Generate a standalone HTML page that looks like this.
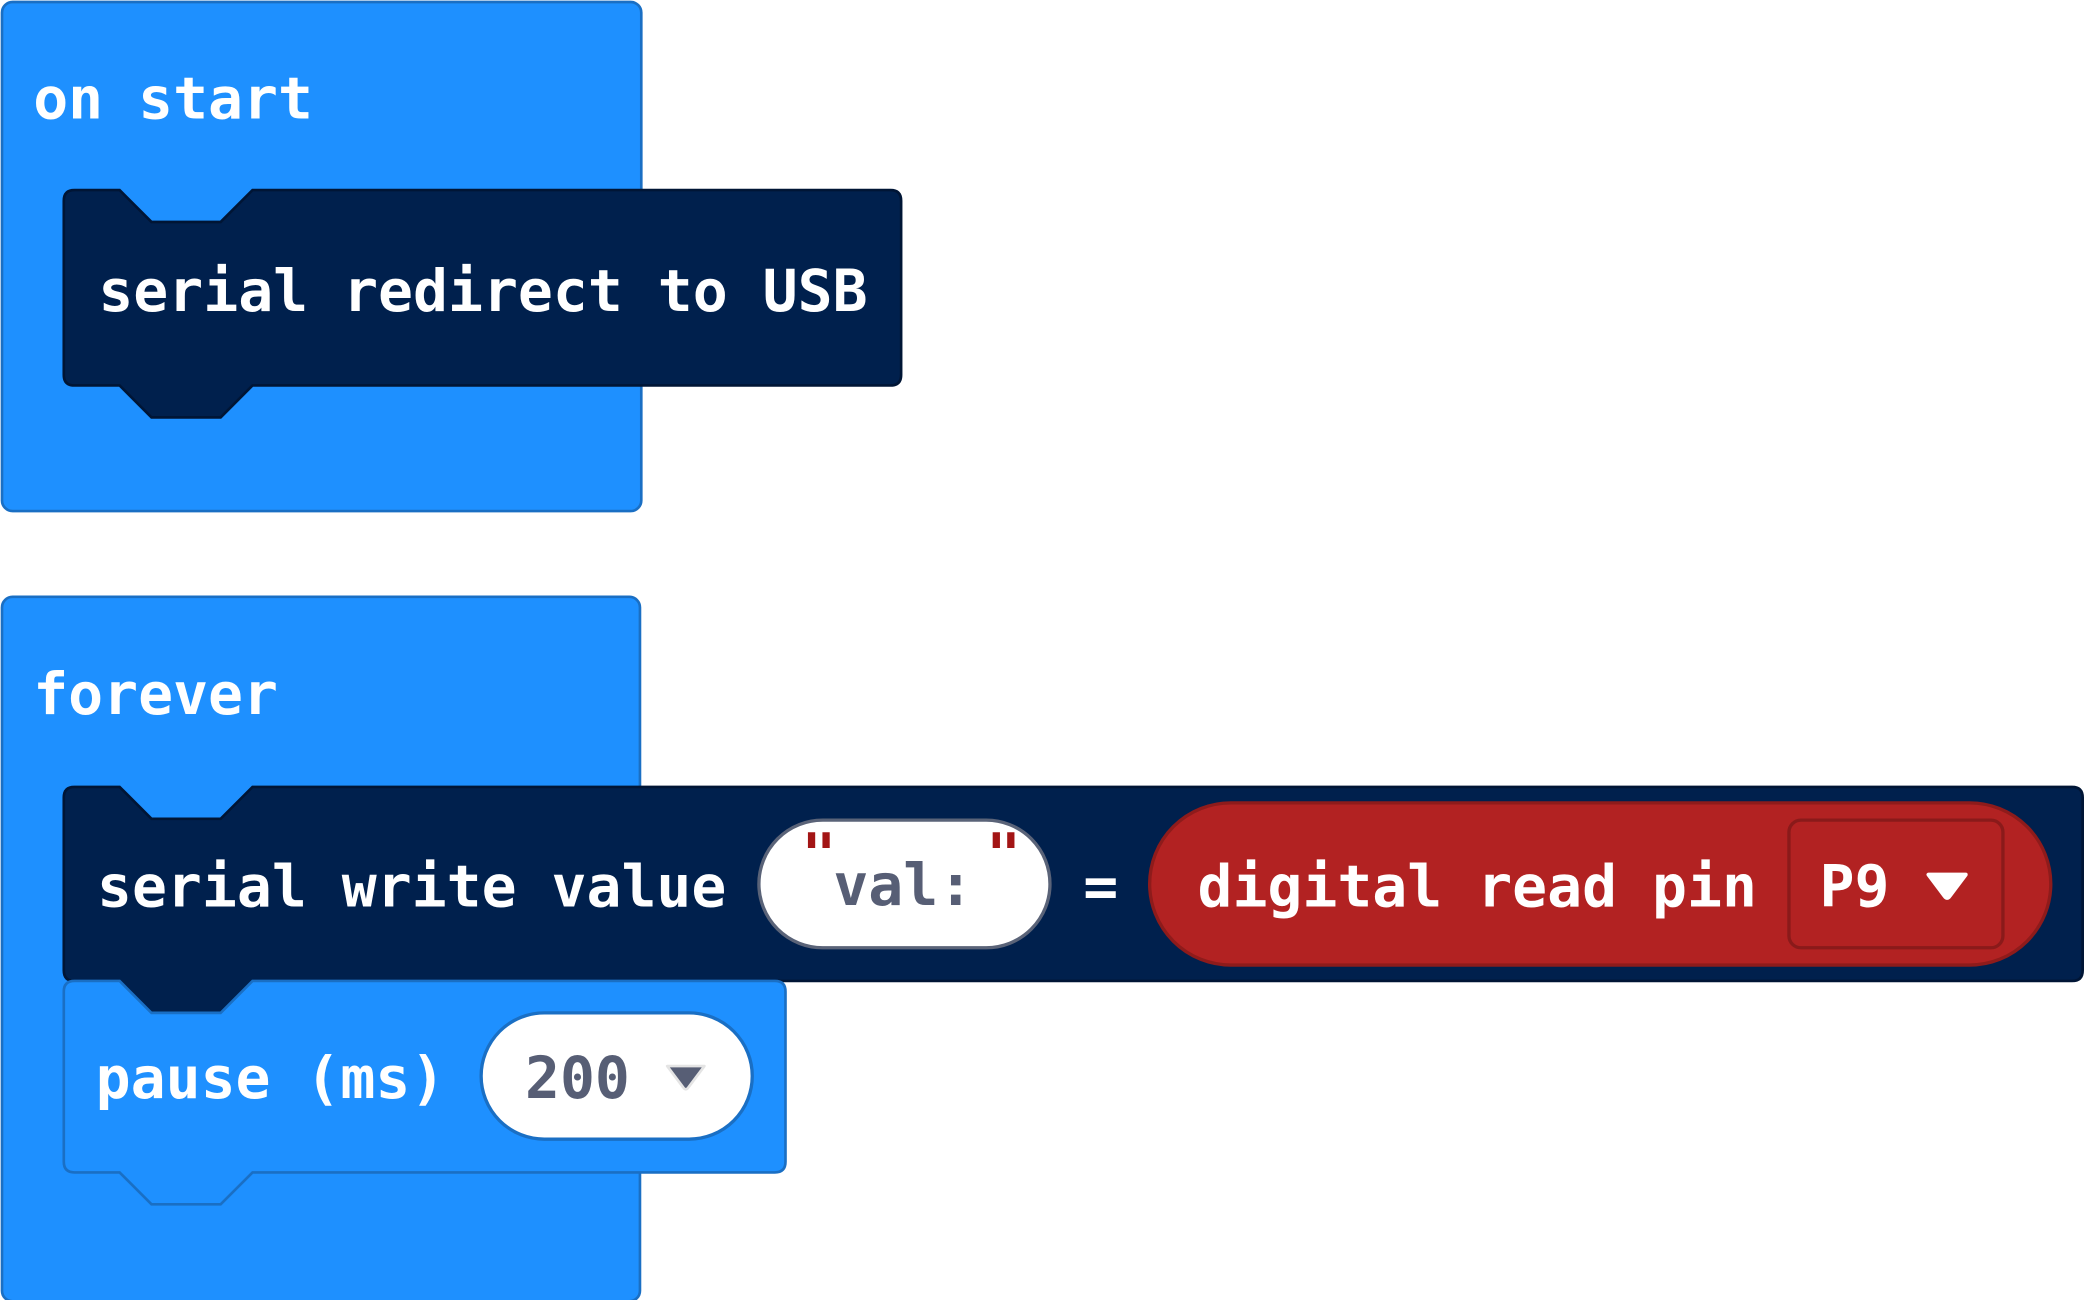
<!DOCTYPE html>
<html><head><meta charset="utf-8"><style>
html,body{margin:0;padding:0;background:#fff;width:2084px;height:1300px;overflow:hidden}
svg{display:block}
text{font-family:"DejaVu Sans Mono","Liberation Mono",monospace;font-weight:bold;font-size:43.7px}
</style></head><body>
<svg width="2084" height="1300" viewBox="0 0 1568 978" preserveAspectRatio="none">
<!-- on start -->
<rect x="1.5" y="1.5" width="481" height="383" rx="8" fill="#1e90ff" stroke="#1a6fc4" stroke-width="2"/>
<text x="25" y="89" fill="#fff">on start</text>
<path d="M56 143 H90 L114 167 H166 L190 143 H670 Q678 143 678 151 V282 Q678 290 670 290 H190 L166 314 H114 L90 290 H56 Q48 290 48 282 V151 Q48 143 56 143 Z" fill="#00204d" stroke="#001535" stroke-width="2"/>
<text x="74" y="234" fill="#fff">serial redirect to USB</text>

<!-- forever -->
<rect x="1.5" y="449" width="480" height="530" rx="8" fill="#1e90ff" stroke="#1a6fc4" stroke-width="2"/>
<text x="25" y="537" fill="#fff">forever</text>
<path d="M56 592 H90 L114 616 H166 L190 592 H1559 Q1567 592 1567 600 V730 Q1567 738 1559 738 H190 L166 762 H114 L90 738 H56 Q48 738 48 730 V600 Q48 592 56 592 Z" fill="#00204d" stroke="#001535" stroke-width="2"/>
<text x="73" y="682" fill="#fff">serial write value</text>
<rect x="571" y="617" width="219" height="96" rx="48" fill="#fff" stroke="#5a6378" stroke-width="2.5"/>
<text x="627" y="681" fill="#575e75">val:</text>
<text x="603" y="658" fill="#a31515" font-size="32">"</text>
<text x="742" y="658" fill="#a31515" font-size="32">"</text>
<text x="815" y="682" fill="#fff">=</text>
<rect x="865" y="604" width="678" height="122" rx="61" fill="#b22222" stroke="#8e1b1b" stroke-width="2.5"/>
<text x="901" y="682" fill="#fff">digital read pin</text>
<rect x="1346" y="617" width="161" height="96" rx="9" fill="#b22222" stroke="#8a1a1a" stroke-width="2.5"/>
<text x="1369" y="682" fill="#fff">P9</text>
<path d="M1451 658 H1479 L1467 674 Q1465 677 1463 674 Z" fill="#fff" stroke="#fff" stroke-width="3" stroke-linejoin="round"/>

<!-- pause -->
<path d="M56 738 H90 L114 762 H166 L190 738 H583 Q591 738 591 746 V874 Q591 882 583 882 H190 L166 906 H114 L90 882 H56 Q48 882 48 874 V746 Q48 738 56 738 Z" fill="#1e90ff" stroke="#1a6fc4" stroke-width="2"/>
<text x="72" y="826" fill="#fff">pause (ms)</text>
<rect x="362" y="762" width="204" height="95" rx="47.5" fill="#fff" stroke="#1a6fc4" stroke-width="2.5"/>
<text x="395" y="826" fill="#575e75">200</text>
<path d="M502 802 H530 L518 818 Q516 821 514 818 Z" fill="#575e75" stroke="#e4e4e4" stroke-width="2" stroke-linejoin="round"/>
</svg>
</body></html>
